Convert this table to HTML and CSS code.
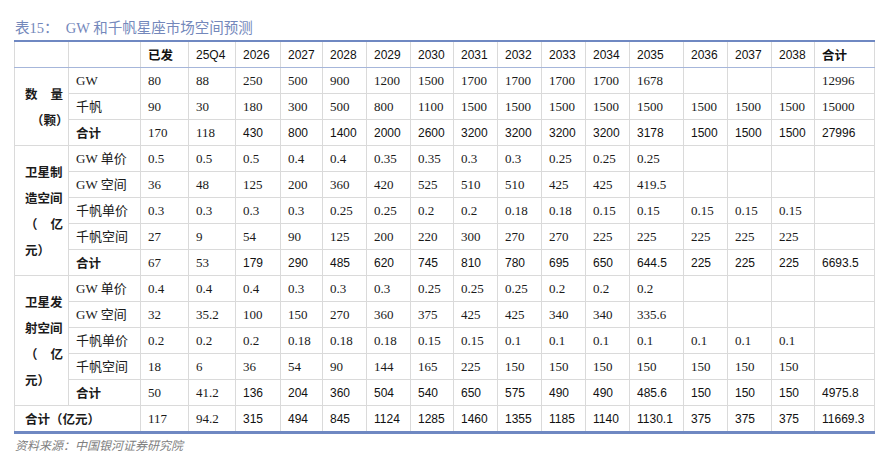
FILE: index.html
```html
<!DOCTYPE html>
<html lang="zh">
<head>
<meta charset="utf-8">
<link rel="stylesheet" href="styles.css">
</head>
<body>
<div class="wrap">
  <p class="caption">表15：  GW 和千帆星座市场空间预测</p>
  <table class="tbl">
    <colgroup>
      <col style="width:54px"><col style="width:72px"><col style="width:48px"><col style="width:47px"><col style="width:45px"><col style="width:42px"><col style="width:44px"><col style="width:44px"><col style="width:43px"><col style="width:44px"><col style="width:44px"><col style="width:44px"><col style="width:44px"><col style="width:54px"><col style="width:44px"><col style="width:44px"><col style="width:43px"><col style="width:60px">
    </colgroup>
    <thead>
      <tr class="head">
        <th></th><th></th><th class="cjk">已发</th><th>25Q4</th><th>2026</th><th>2027</th><th>2028</th><th>2029</th><th>2030</th><th>2031</th><th>2032</th><th>2033</th><th>2034</th><th>2035</th><th>2036</th><th>2037</th><th>2038</th><th class="cjk">合计</th>
      </tr>
    </thead>
    <tbody>
      <tr>
        <td rowspan="3" class="grp"><span class="gl j">数量</span><span class="gl ind">（颗）</span></td>
        <td>GW</td><td>80</td><td>88</td><td>250</td><td>500</td><td>900</td><td>1200</td><td>1500</td><td>1700</td><td>1700</td><td>1700</td><td>1700</td><td>1678</td><td></td><td></td><td></td><td>12996</td>
      </tr>
      <tr>
        <td>千帆</td><td>90</td><td>30</td><td>180</td><td>300</td><td>500</td><td>800</td><td>1100</td><td>1500</td><td>1500</td><td>1500</td><td>1500</td><td>1500</td><td>1500</td><td>1500</td><td>1500</td><td>15000</td>
      </tr>
      <tr class="sum">
        <td class="b">合计</td><td>170</td><td>118</td><td class="s">430</td><td class="s">800</td><td class="s">1400</td><td class="s">2000</td><td class="s">2600</td><td class="s">3200</td><td class="s">3200</td><td class="s">3200</td><td class="s">3200</td><td class="s">3178</td><td class="s">1500</td><td class="s">1500</td><td class="s">1500</td><td class="s">27996</td>
      </tr>

      <tr>
        <td rowspan="5" class="grp"><span class="gl">卫星制</span><span class="gl">造空间</span><span class="gl j">（亿</span><span class="gl">元）</span></td>
        <td>GW 单价</td><td>0.5</td><td>0.5</td><td>0.5</td><td>0.4</td><td>0.4</td><td>0.35</td><td>0.35</td><td>0.3</td><td>0.3</td><td>0.25</td><td>0.25</td><td>0.25</td><td></td><td></td><td></td><td></td>
      </tr>
      <tr>
        <td>GW 空间</td><td>36</td><td>48</td><td>125</td><td>200</td><td>360</td><td>420</td><td>525</td><td>510</td><td>510</td><td>425</td><td>425</td><td>419.5</td><td></td><td></td><td></td><td></td>
      </tr>
      <tr>
        <td>千帆单价</td><td>0.3</td><td>0.3</td><td>0.3</td><td>0.3</td><td>0.25</td><td>0.25</td><td>0.2</td><td>0.2</td><td>0.18</td><td>0.18</td><td>0.15</td><td>0.15</td><td>0.15</td><td>0.15</td><td>0.15</td><td></td>
      </tr>
      <tr>
        <td>千帆空间</td><td>27</td><td>9</td><td>54</td><td>90</td><td>125</td><td>200</td><td>220</td><td>300</td><td>270</td><td>270</td><td>225</td><td>225</td><td>225</td><td>225</td><td>225</td><td></td>
      </tr>
      <tr class="sum">
        <td class="b">合计</td><td>67</td><td>53</td><td class="s">179</td><td class="s">290</td><td class="s">485</td><td class="s">620</td><td class="s">745</td><td class="s">810</td><td class="s">780</td><td class="s">695</td><td class="s">650</td><td class="s">644.5</td><td class="s">225</td><td class="s">225</td><td class="s">225</td><td class="s">6693.5</td>
      </tr>

      <tr>
        <td rowspan="5" class="grp"><span class="gl">卫星发</span><span class="gl">射空间</span><span class="gl j">（亿</span><span class="gl">元）</span></td>
        <td>GW 单价</td><td>0.4</td><td>0.4</td><td>0.4</td><td>0.3</td><td>0.3</td><td>0.3</td><td>0.25</td><td>0.25</td><td>0.25</td><td>0.2</td><td>0.2</td><td>0.2</td><td></td><td></td><td></td><td></td>
      </tr>
      <tr>
        <td>GW 空间</td><td>32</td><td>35.2</td><td>100</td><td>150</td><td>270</td><td>360</td><td>375</td><td>425</td><td>425</td><td>340</td><td>340</td><td>335.6</td><td></td><td></td><td></td><td></td>
      </tr>
      <tr>
        <td>千帆单价</td><td>0.2</td><td>0.2</td><td>0.2</td><td>0.18</td><td>0.18</td><td>0.18</td><td>0.15</td><td>0.15</td><td>0.1</td><td>0.1</td><td>0.1</td><td>0.1</td><td>0.1</td><td>0.1</td><td>0.1</td><td></td>
      </tr>
      <tr>
        <td>千帆空间</td><td>18</td><td>6</td><td>36</td><td>54</td><td>90</td><td>144</td><td>165</td><td>225</td><td>150</td><td>150</td><td>150</td><td>150</td><td>150</td><td>150</td><td>150</td><td></td>
      </tr>
      <tr class="sum">
        <td class="b">合计</td><td>50</td><td>41.2</td><td class="s">136</td><td class="s">204</td><td class="s">360</td><td class="s">504</td><td class="s">540</td><td class="s">650</td><td class="s">575</td><td class="s">490</td><td class="s">490</td><td class="s">485.6</td><td class="s">150</td><td class="s">150</td><td class="s">150</td><td class="s">4975.8</td>
      </tr>

      <tr class="total">
        <td colspan="2" class="b tot">合计（亿元）</td><td>117</td><td>94.2</td><td class="s">315</td><td class="s">494</td><td class="s">845</td><td class="s">1124</td><td class="s">1285</td><td class="s">1460</td><td class="s">1355</td><td class="s">1185</td><td class="s">1140</td><td class="s">1130.1</td><td class="s">375</td><td class="s">375</td><td class="s">375</td><td class="s">11669.3</td>
      </tr>
    </tbody>
  </table>
  <p class="source">资料来源：中国银河证券研究院</p>
</div>
</body>
</html>
```

FILE: styles.css
```css
html, body {
  margin: 0;
  padding: 0;
  background: #ffffff;
}

body {
  font-family: "Liberation Serif", "Noto Sans CJK SC", serif;
  color: #1a1a1a;
}

.wrap {
  padding: 19px 14px 0 14px;
  width: 860px;
}

.caption {
  margin: 0 0 3px 1px;
  font-size: 14.5px;
  line-height: 18px;
  color: #7488bb;
  white-space: pre;
}

.tbl {
  width: 860px;
  border-collapse: collapse;
  table-layout: fixed;
  border-top: 2px solid #6f88c2;
  border-bottom: 3px solid #6f88c2;
  font-size: 13px;
}

.tbl th,
.tbl td {
  border: 1px solid #dadada;
  height: 25px;
  padding: 0 0 0 7px;
  text-align: left;
  vertical-align: middle;
  white-space: nowrap;
  line-height: 16px;
}

.tbl th:first-child,
.tbl td:first-child,
.tbl td.grp {
  border-left: 1px solid #dadada;
}

.head th {
  font-family: "Liberation Sans", "Noto Sans CJK SC", sans-serif;
  font-weight: normal;
  font-size: 12px;
  color: #111;
  border-bottom: 1px solid #a6b6da;
}

.head th.cjk {
  font-family: "Noto Sans CJK SC", sans-serif;
  font-weight: 700;
  font-size: 12.5px;
}

.tbl td.grp {
  padding: 0 0 0 10px;
  font-family: "Noto Sans CJK SC", sans-serif;
  font-weight: 700;
  font-size: 12.5px;
  line-height: 26px;
}

.gl {
  display: block;
  width: 38px;
}

.gl.j {
  text-align: justify;
  text-align-last: justify;
}

.gl.ind {
  padding-left: 6px;
}

.tbl td.b {
  font-family: "Noto Sans CJK SC", sans-serif;
  font-weight: 700;
  font-size: 12.5px;
}

.tbl td.tot {
  padding-left: 10px;
}

.tbl td.s {
  font-family: "Liberation Sans", "Noto Sans CJK SC", sans-serif;
  font-size: 12px;
  color: #111;
}

.source {
  margin: 3px 0 0 1px;
  font-family: "Noto Sans CJK SC", sans-serif;
  font-style: italic;
  font-size: 12px;
  line-height: 16px;
  color: #808080;
}
```
